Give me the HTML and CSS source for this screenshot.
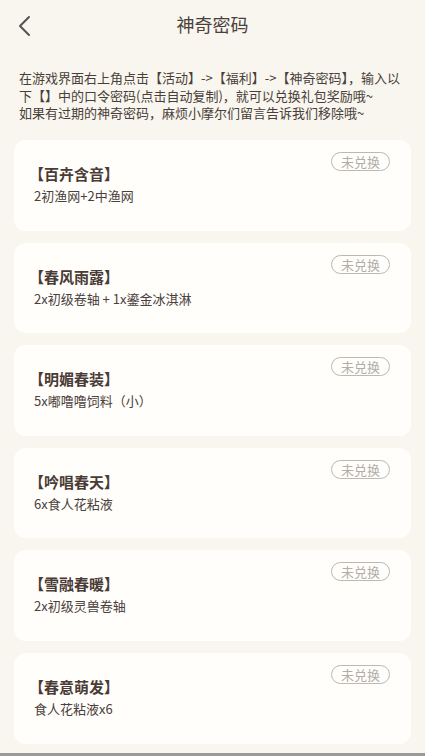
FILE: index.html
```html
<!DOCTYPE html>
<html lang="zh-CN">
<head>
    <meta charset="UTF-8">
    <meta name="viewport" content="width=device-width, initial-scale=1.0">
    <title>神奇密码</title>
    <link rel="stylesheet" href="styles.css">
</head>
<body>
    <div class="page">
        <!-- 顶部导航 -->
        <header class="nav">
            <a class="nav-back" href="#">
                <svg width="14" height="22" viewBox="0 0 14 22">
                    <path d="M11 2 L2 11 L11 20" fill="none" stroke="#5a5450" stroke-width="2" stroke-linecap="round" stroke-linejoin="round"/>
                </svg>
            </a>
            <h1 class="nav-title">神奇密码</h1>
        </header>

        <p class="intro">在游戏界面右上角点击【活动】->【福利】->【神奇密码】，输入以下【】中的口令密码(点击自动复制)，就可以兑换礼包奖励哦~<br>如果有过期的神奇密码，麻烦小摩尔们留言告诉我们移除哦~</p>

        <div class="code-list">
            <div class="code-card">
                <span class="code-status">未兑换</span>
                <div class="code-name">【百卉含音】</div>
                <div class="code-reward">2初渔网+2中渔网</div>
            </div>
            <div class="code-card">
                <span class="code-status">未兑换</span>
                <div class="code-name">【春风雨露】</div>
                <div class="code-reward">2x初级卷轴 + 1x鎏金冰淇淋</div>
            </div>
            <div class="code-card">
                <span class="code-status">未兑换</span>
                <div class="code-name">【明媚春装】</div>
                <div class="code-reward">5x嘟噜噜饲料（小）</div>
            </div>
            <div class="code-card">
                <span class="code-status">未兑换</span>
                <div class="code-name">【吟唱春天】</div>
                <div class="code-reward">6x食人花粘液</div>
            </div>
            <div class="code-card">
                <span class="code-status">未兑换</span>
                <div class="code-name">【雪融春暖】</div>
                <div class="code-reward">2x初级灵兽卷轴</div>
            </div>
            <div class="code-card">
                <span class="code-status">未兑换</span>
                <div class="code-name">【春意萌发】</div>
                <div class="code-reward">食人花粘液x6</div>
            </div>
        </div>
    </div>
</body>
</html>
```

FILE: styles.css
```css
html {
    background-color: #9c9a98;
}

body {
    margin: 0;
    padding: 0;
    font-family: "Noto Sans CJK SC", "Noto Sans", sans-serif;
    color: #4a3f3b;
}

.page {
    background-color: #f8f6ee;
    padding-bottom: 9.4px;
}

.nav {
    position: relative;
    height: 51px;
    box-sizing: border-box;
    padding-bottom: 3px;
    display: flex;
    align-items: center;
    justify-content: center;
}

.nav-back {
    position: absolute;
    left: 18px;
    top: 15px;
    display: block;
}

.nav-title {
    margin: 0;
    font-size: 18px;
    font-weight: normal;
    color: #4a403c;
}

.intro {
    margin: 0;
    padding: 18px 19px 17.9px;
    font-size: 13px;
    line-height: 17.7px;
    color: #4a3e3a;
}

.code-list {
    display: flex;
    flex-direction: column;
    gap: 12px;
    padding: 0 14px;
}

.code-card {
    position: relative;
    height: 90.6px;
    box-sizing: border-box;
    padding: 23px 20px 0;
    background-color: #fffefa;
    border-radius: 12px;
}

.code-name {
    font-size: 15px;
    font-weight: bold;
    line-height: 22px;
    color: #4a3b36;
    margin-left: -5px;
}

.code-reward {
    margin-top: 2px;
    font-size: 13px;
    line-height: 18px;
    color: #4a403c;
}

.code-status {
    position: absolute;
    top: 12px;
    right: 21px;
    width: 57px;
    height: 17px;
    line-height: 17px;
    text-align: center;
    font-size: 13px;
    color: #b2adaa;
    border: 1px solid #bdb8b4;
    border-radius: 10px;
}
```
